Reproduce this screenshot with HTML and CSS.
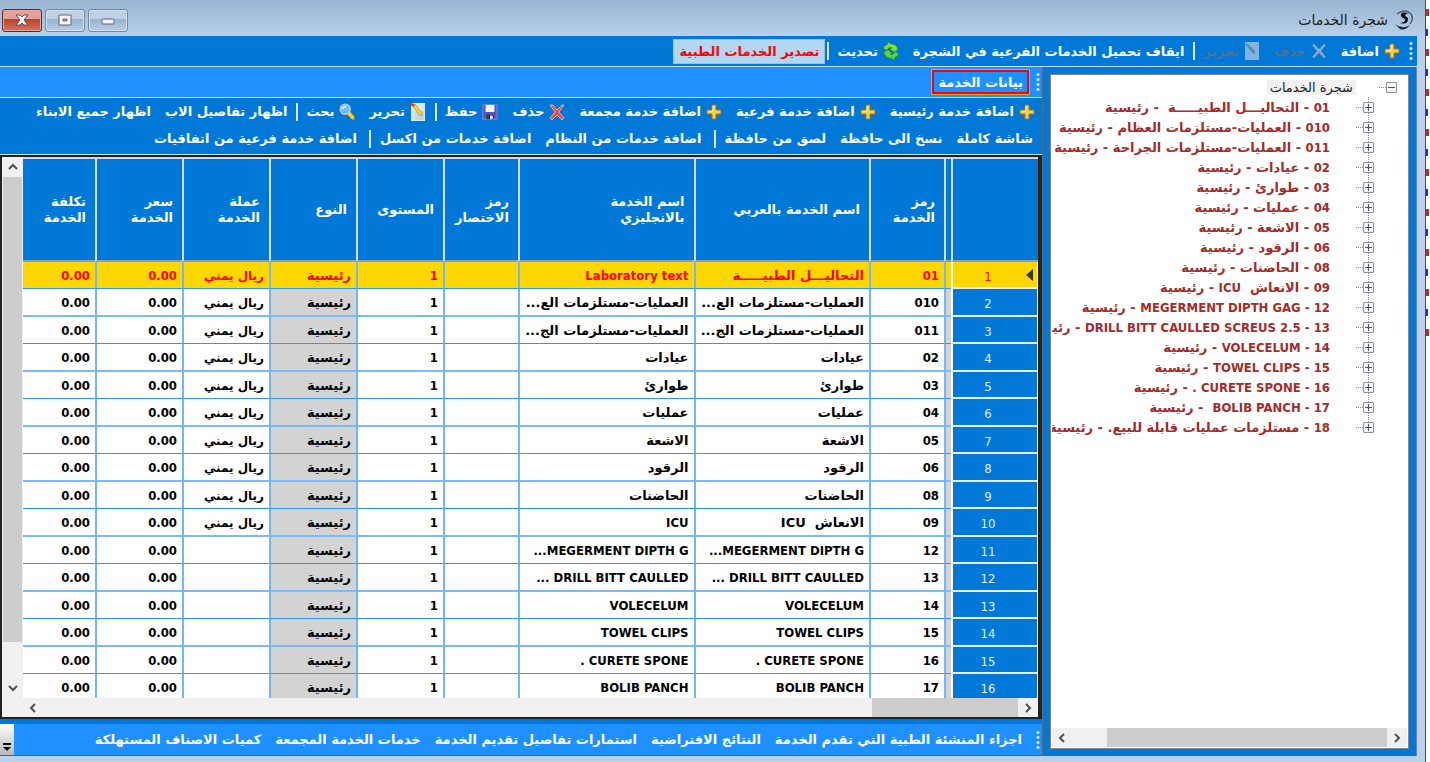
FILE: index.html
```html
<!DOCTYPE html>
<html lang="ar" dir="rtl">
<head>
  <meta charset="UTF-8">
  <meta name="viewport" content="width=device-width, initial-scale=1.0">
  <title>شجرة الخدمات</title>
  <link rel="stylesheet" href="styles.css">
</head>
<body>

  <!-- Shared icons -->
  <svg class="sprite" aria-hidden="true">
    <symbol id="i-plus" viewBox="0 0 16 16"><path d="M6 1h4v5h5v4h-5v5H6v-5H1V6h5z" fill="#f6d050" stroke="#a87a10"/><path d="M7 7V2.500h1.500M2.500 7.500H7" fill="none" stroke="#ffef9e"/></symbol>
    <symbol id="i-x" viewBox="0 0 16 16"><path d="M1 1l3 0 4 5 5-5 2 0-5 7 5 6-2 2-5-5-5 5-2-2 5-6z" fill="#ee4a35" stroke="#ffd9d0" stroke-width=".7"/></symbol>
    <symbol id="i-x-off" viewBox="0 0 16 16"><path d="M1 2l2-1 5 5 5-5 2 1-5 6 5 6-2 1-5-5-5 5-2-1 5-6z" fill="#8aa6c4"/></symbol>
    <symbol id="i-doc-off" viewBox="0 0 16 18"><path d="M1 0h14v18H1z" fill="#80b4e2"/><path d="M1 2l2-1 8 8v3l-3-1z" fill="#5b8bbb"/></symbol>
    <symbol id="i-edit" viewBox="0 0 16 18"><path d="M1 0h14v18H1z" fill="#d7eaf9"/><path d="M5 8h9v9H5z" fill="#b9daf3"/><path d="M3 3l2-2 7 9v3l-3-1z" fill="#ffcf22" stroke="#c48a00" stroke-width=".6"/><path d="M0 1l2-1 3 2-2 2z" fill="#e8322c"/></symbol>
    <symbol id="i-save" viewBox="0 0 18 18"><path d="M1 1h16v16H1z" fill="#5a55b5" stroke="#8d8ae0"/><path d="M4 1h10v8H4z" fill="#f4f4ff"/><path d="M5 12h8v5H5z" fill="#2b3352"/><path d="M9 13h3v4H9z" fill="#dfe6f5"/></symbol>
    <symbol id="i-search" viewBox="0 0 18 20"><path d="M10 11l3-1 4 5v4l-3-1-4-5z" fill="#ffd500" stroke="#c99700" stroke-width=".6"/><circle cx="7" cy="7" r="5.500" fill="#6cb9f7" stroke="#b9c9dd" stroke-width="2"/><path d="M4 7q0-3 4-3" stroke="#e4f4ff" stroke-width="1.500" fill="none"/></symbol>
    <symbol id="i-refresh" viewBox="0 0 16 18"><path d="M1 4l3-1 1-3 3 2q6 0 7 6l-4 2-4-3 2-1q-3-2-5 2l-3-1z" fill="#7be03a" stroke="#2f9a17" stroke-width=".6"/><path d="M15 14l-3 1-1 3-3-2q-6 0-7-6l4-2 4 3-2 1q3 2 5-2l3 1z" fill="#5fd52f" stroke="#2f9a17" stroke-width=".6"/></symbol>
  </svg>

  <div class="screen">
    <div class="behind" aria-hidden="true"><i></i><i></i><i></i><i></i><i></i><i></i><i></i><i></i><i></i><i></i><i></i><i></i><i></i><i></i><i></i><i></i><i></i></div>

    <div class="window">
      <header class="titlebar">
        <svg class="app-icon" viewBox="0 0 20 20"><path d="M3 4q8-6 14 0 3 5-1 10" fill="none" stroke="#4d5f70" stroke-width="1.500"/><path d="M1 14q7 6 15 1-5 6-10 4z" fill="#223"/><path d="M14 3q-8-2-7 3 1 2 4 3 1 3-5 4 8 2 8-4 0-2-3-3 0-2 3-3z" fill="#0b1018"/></svg>
        <h1>شجرة الخدمات</h1>
        <div class="win-buttons">
          <button class="win-btn" aria-label="تصغير"><svg viewBox="0 0 20 14"><rect x="4" y="6" width="12" height="5" rx="1" fill="#f5f5f5" stroke="#5c6575"/></svg></button>
          <button class="win-btn" aria-label="تكبير"><svg viewBox="0 0 20 14"><path d="M4 2h12v10H4zM8 6v2h4V6z" fill="#f5f5f5" fill-rule="evenodd" stroke="#5c6575"/></svg></button>
          <button class="win-btn close" aria-label="اغلاق"><svg viewBox="0 0 20 14"><path d="M4 2h4l2 2 2-2h4l-4 5 4 5h-4l-2-2-2 2H4l4-5z" fill="#f5f5f5" stroke="#5a4a55"/></svg></button>
        </div>
      </header>

      <div class="toolbar top-bar">
        <span class="grip"></span>
        <button class="tool"><svg><use href="#i-plus"/></svg>اضافة</button>
        <button class="tool" disabled><svg><use href="#i-x-off"/></svg>حذف</button>
        <button class="tool" disabled><svg><use href="#i-doc-off"/></svg>تحرير</button>
        <span class="sep"></span>
        <button class="tool">ايقاف تحميل الخدمات الفرعية في الشجرة</button>
        <button class="tool"><svg><use href="#i-refresh"/></svg>تحديث</button>
        <span class="sep"></span>
        <button class="tool export">تصدير الخدمات الطبية</button>
      </div>

      <div class="content">
        <aside class="tree-pane">
          <div class="tree-box">
            <ul class="tree">
              <li class="root"><button class="toggle minus" aria-label="طي"></button><span class="label">شجرة الخدمات</span></li>
              <li><button class="toggle" aria-label="توسيع"></button><span class="label"><span class="en">01</span> - التحاليـــل الطبيـــــة&nbsp; - رئيسية</span></li>
              <li><button class="toggle" aria-label="توسيع"></button><span class="label"><span class="en">010</span> - العمليات-مستلزمات العظام - رئيسية</span></li>
              <li><button class="toggle" aria-label="توسيع"></button><span class="label"><span class="en">011</span> - العمليات-مستلزمات الجراحة - رئيسية</span></li>
              <li><button class="toggle" aria-label="توسيع"></button><span class="label"><span class="en">02</span> - عيادات - رئيسية</span></li>
              <li><button class="toggle" aria-label="توسيع"></button><span class="label"><span class="en">03</span> - طوارئ - رئيسية</span></li>
              <li><button class="toggle" aria-label="توسيع"></button><span class="label"><span class="en">04</span> - عمليات - رئيسية</span></li>
              <li><button class="toggle" aria-label="توسيع"></button><span class="label"><span class="en">05</span> - الاشعة - رئيسية</span></li>
              <li><button class="toggle" aria-label="توسيع"></button><span class="label"><span class="en">06</span> - الرقود - رئيسية</span></li>
              <li><button class="toggle" aria-label="توسيع"></button><span class="label"><span class="en">08</span> - الحاضنات - رئيسية</span></li>
              <li><button class="toggle" aria-label="توسيع"></button><span class="label"><span class="en">09</span> - الانعاش&nbsp; <span class="en">ICU</span> - رئيسية</span></li>
              <li><button class="toggle" aria-label="توسيع"></button><span class="label"><span class="en">12 - MEGERMENT DIPTH GAG</span> - رئيسية</span></li>
              <li><button class="toggle" aria-label="توسيع"></button><span class="label"><span class="en">13 - DRILL BITT CAULLED SCREUS 2.5</span> - رئيسية</span></li>
              <li><button class="toggle" aria-label="توسيع"></button><span class="label"><span class="en">14 - VOLECELUM</span> - رئيسية</span></li>
              <li><button class="toggle" aria-label="توسيع"></button><span class="label"><span class="en">15 - TOWEL CLIPS</span> - رئيسية</span></li>
              <li><button class="toggle" aria-label="توسيع"></button><span class="label"><span class="en">16 - CURETE SPONE .</span> - رئيسية</span></li>
              <li><button class="toggle" aria-label="توسيع"></button><span class="label"><span class="en">17 - BOLIB PANCH</span>&nbsp; - رئيسية</span></li>
              <li><button class="toggle" aria-label="توسيع"></button><span class="label"><span class="en">18</span> - مستلزمات عمليات قابلة للبيع. - رئيسية</span></li>
            </ul>
            <div class="hscroll">
              <svg class="arrow" viewBox="0 0 12 12"><path d="M4 2l4 4-4 4"/></svg>
              <span class="thumb"></span>
              <svg class="arrow" viewBox="0 0 12 12"><path d="M8 2L4 6l4 4"/></svg>
            </div>
          </div>
        </aside>

        <main class="main">
          <nav class="toolbar tab-bar">
            <span class="grip"></span>
            <button class="tab active">بيانات الخدمة</button>
          </nav>

          <div class="tools">
            <div class="toolbar icons">
              <button class="tool"><svg><use href="#i-plus"/></svg>اضافة خدمة رئيسية</button>
              <button class="tool"><svg><use href="#i-plus"/></svg>اضافة خدمة فرعية</button>
              <button class="tool"><svg><use href="#i-plus"/></svg>اضافة خدمة مجمعة</button>
              <button class="tool"><svg><use href="#i-x"/></svg>حذف</button>
              <button class="tool"><svg><use href="#i-save"/></svg>حفظ</button>
              <span class="sep"></span>
              <button class="tool"><svg><use href="#i-edit"/></svg>تحرير</button>
              <button class="tool"><svg><use href="#i-search"/></svg>بحث</button>
              <span class="sep"></span>
              <button class="tool">اظهار تفاصيل الاب</button>
              <button class="tool">اظهار جميع الابناء</button>
            </div>
            <div class="toolbar">
              <button class="tool">شاشة كاملة</button>
              <button class="tool">نسخ الى حافظة</button>
              <button class="tool">لصق من حافظة</button>
              <span class="sep"></span>
              <button class="tool">اضافة خدمات من النظام</button>
              <button class="tool">اضافة خدمات من اكسل</button>
              <span class="sep"></span>
              <button class="tool">اضافة خدمة فرعية من اتفاقيات</button>
            </div>
          </div>

          <div class="grid">
            <div class="grid-body">
              <div class="table-wrap">
                <table>
                  <colgroup>
                    <col class="c-row"><col class="c-id"><col class="c-code"><col><col><col class="c-code"><col class="c-mid"><col class="c-mid"><col class="c-mid"><col class="c-mid"><col class="c-cost">
                  </colgroup>
                  <thead>
                    <tr><th></th><th></th><th>رمز<br>الخدمة</th><th>اسم الخدمة بالعربي</th><th>اسم الخدمة<br>بالانجليزي</th><th>رمز<br>الاختصار</th><th>المستوى</th><th>النوع</th><th>عملة<br>الخدمة</th><th>سعر<br>الخدمة</th><th>تكلفة<br>الخدمة</th></tr>
                  </thead>
                  <tbody id="rows"></tbody>
                </table>
              </div>
              <div class="vscroll">
                <svg class="arrow" viewBox="0 0 12 12"><path d="M2 8l4-4 4 4"/></svg>
                <span class="thumb"></span>
                <svg class="arrow" viewBox="0 0 12 12"><path d="M2 4l4 4 4-4"/></svg>
              </div>
            </div>
            <div class="hscroll">
              <svg class="arrow" viewBox="0 0 12 12"><path d="M4 2l4 4-4 4"/></svg>
              <span class="thumb"></span>
              <svg class="arrow" viewBox="0 0 12 12"><path d="M8 2L4 6l4 4"/></svg>
            </div>
          </div>

          <nav class="toolbar bottom-bar">
            <span class="grip"></span>
            <button class="tab">اجزاء المنشئة الطبية التي تقدم الخدمة</button>
            <button class="tab">النتائج الافتراضية</button>
            <button class="tab">استمارات تفاصيل تقديم الخدمة</button>
            <button class="tab">خدمات الخدمة المجمعة</button>
            <button class="tab">كميات الاصناف المستهلكة</button>
            <button class="more" aria-label="المزيد"><svg viewBox="0 0 8 8"><path d="M0 0h8v2H0zM0 4h8L4 8z"/></svg></button>
          </nav>
        </main>
      </div>
    </div>
  </div>

  <script src="script.js"></script>
</body>
</html>
```
FILE: styles.css
```css
* {
  box-sizing: border-box;
}

body {
  margin: 0;
  font-family: "DejaVu Sans", Tahoma, sans-serif;
  font-size: 13px;
  font-weight: bold;
  color: #000;
}

button {
  font: inherit;
  color: inherit;
  background: none;
  border: none;
  padding: 0;
}

.en {
  font-family: "DejaVu Sans Condensed", "DejaVu Sans", sans-serif;
}

.sprite {
  display: none;
}

.screen {
  display: flex;
  height: 100vh;
  overflow: hidden;
}

/* edge of the window that lies underneath */
.behind {
  width: 4px;
  padding-top: 9px;
  background: #fff;
  display: flex;
  flex-direction: column;
  align-items: flex-end;
  gap: 13px;
  flex-shrink: 0;
}

.behind i {
  height: 7px;
  width: 3px;
  background: #b5302c;
}

.behind i:nth-child(even) {
  background: #1a2fe0;
  width: 2px;
}

.window {
  flex: 1;
  min-width: 0;
  display: flex;
  flex-direction: column;
  background: #b9d1ea;
  border-right: 1px solid #4a4f57;
  padding: 0 8px 6px 0;
}

/* Title bar */
.titlebar {
  height: 36px;
  flex-shrink: 0;
  display: flex;
  align-items: center;
  margin-right: -8px;
  padding: 4px 11px 0 2px;
  gap: 6px;
  background: linear-gradient(#99b4d1, #b9d1ea);
}

.app-icon {
  width: 20px;
  height: 20px;
}

.titlebar h1 {
  margin: 0;
  font-size: 14px;
  font-weight: normal;
  color: #1b1b1b;
}

.win-buttons {
  margin-right: auto;
  display: flex;
  gap: 3px;
}

.win-btn {
  width: 40px;
  height: 23px;
  display: flex;
  align-items: center;
  justify-content: center;
  border: 1px solid #75869e;
  border-radius: 3px;
  box-shadow: inset 0 0 0 1px #d3e1f0;
  background: linear-gradient(#bfd1e5 45%, #98b3d0 45%, #b7cee6);
}

.win-btn svg {
  width: 20px;
  height: 14px;
}

.win-btn.close {
  border-color: #582835;
  box-shadow: inset 0 0 0 1px #e8a79c;
  background: linear-gradient(#e3a296 45%, #bb4228 45%, #d4765f);
}

/* Toolbars */
.toolbar {
  display: flex;
  align-items: center;
  flex-shrink: 0;
  color: #fff;
  white-space: nowrap;
}

.top-bar {
  height: 31px;
  padding-right: 2px;
  background: #0078d7;
  border-bottom: 1px solid #c5e2fa;
}

.grip {
  width: 4px;
  height: 20px;
  margin: 0 2px;
  background: radial-gradient(circle, #cfe6fb 1px, transparent 2px) 0 0 / 4px 5px;
}

.tool,
.tab {
  display: flex;
  align-items: center;
  gap: 5px;
  height: 25px;
  padding: 0 7px;
}

.tool svg {
  width: 16px;
  height: 18px;
}

.tool:disabled {
  color: #4f7193;
}

.sep {
  width: 2px;
  height: 18px;
  margin: 0 2px 0 5px;
  background: #dbeafa;
}

.top-bar .sep,
.icons .sep {
  margin: 0 1px 0 2px;
}

.export {
  padding: 0 5px;
  color: #f00;
  background: #b3d7f3;
  border: 1px solid #8fc4ee;
}

/* Tree */
.content {
  flex: 1;
  min-height: 0;
  display: flex;
}

.tree-pane {
  width: 375px;
  flex-shrink: 0;
  padding: 7px;
  background: #0078d7;
  border-left: 1px solid #5a6c7d;
  border-right: 1px solid #6e88a3;
}

.tree-box {
  height: 100%;
  display: flex;
  flex-direction: column;
  background: #fff;
  border: 1px solid #828790;
  padding: 1px;
  overflow: hidden;
}

.tree {
  flex: 1;
  margin: 0;
  padding: 1px 0 0;
  list-style: none;
  overflow: hidden;
}

.tree li {
  display: flex;
  align-items: center;
  height: 20px;
  padding-right: 33px;
  color: #a52a2a;
  white-space: nowrap;
  background: repeating-linear-gradient(#888 0 1px, transparent 1px 2px) right 38px top 0 / 1px 100% no-repeat;
}

.tree li:last-child {
  background-size: 1px 10px;
}

.tree .root {
  padding-right: 10px;
  color: #222;
  font-weight: normal;
  background: none;
}

.toggle {
  width: 11px;
  height: 11px;
  flex-shrink: 0;
  border: 1px solid #919191;
  border-radius: 1px;
  background:
    linear-gradient(#3a55a0, #3a55a0) center / 7px 1px no-repeat,
    linear-gradient(#3a55a0, #3a55a0) center / 1px 7px no-repeat,
    #f7f7f7;
}

.toggle.minus {
  background:
    linear-gradient(#3a55a0, #3a55a0) center / 7px 1px no-repeat,
    #f7f7f7;
}

.tree li::before {
  content: "";
  order: 1;
  flex-shrink: 0;
  width: 7px;
  border-top: 1px dotted #888;
  margin-left: 23px;
}

.label {
  order: 2;
  padding: 0 3px;
}

.root .label {
  background: #f0f0f0;
}

/* Scroll bars */
.hscroll {
  display: flex;
  align-items: center;
  height: 19px;
  flex-shrink: 0;
  background: #f0f0f0;
}

.arrow {
  width: 12px;
  height: 12px;
  margin: 4px;
  flex-shrink: 0;
  fill: none;
  stroke: #505050;
  stroke-width: 2;
}

.hscroll .thumb {
  width: 280px;
  height: 100%;
  margin-left: auto;
  background: #cdcdcd;
}

.grid .hscroll {
  padding-left: 21px;
}

.grid .hscroll .thumb {
  width: 146px;
}

.vscroll {
  width: 21px;
  display: flex;
  flex-direction: column;
}

.vscroll .thumb {
  flex: 1;
  margin: 0 1px 36px;
  background: #cdcdcd;
}

/* Main area */
.main {
  flex: 1;
  min-width: 0;
  display: flex;
  flex-direction: column;
  background: #0078d7;
}

.tab-bar {
  height: 31px;
  background: #1e90ff;
  border-bottom: 1px solid #c5e2fa;
}

.tab-bar .grip,
.bottom-bar .grip {
  margin-left: 7px;
}

.tab.active {
  height: 24px;
  padding: 0 4px;
  border: 2px solid #f00;
  outline: 1px solid #e8a317;
}

.tools {
  padding: 0 0 2px;
  border-bottom: 1px solid #c5e2fa;
}

.tools .toolbar {
  height: 27px;
  padding-right: 2px;
}

.tools .icons {
  padding-right: 0;
}

/* Data grid */
.grid {
  flex: 1;
  min-height: 0;
  display: flex;
  flex-direction: column;
  border: 2px solid #222;
  border-right-width: 4px;
  background: #f0f0f0;
}

.grid-body {
  flex: 1;
  min-height: 0;
  display: flex;
}

.table-wrap {
  flex: 1;
  min-width: 0;
  overflow: hidden;
  border-top: 2px solid #c8d8e8;
  background: #fff;
}

table {
  width: 100%;
  table-layout: fixed;
  border-collapse: separate;
  border-spacing: 0;
}

.c-row {
  width: 87px;
}

.c-id {
  width: 7px;
}

.c-code {
  width: 75px;
}

.c-mid {
  width: 87px;
}

.c-cost {
  width: 72px;
}

th {
  height: 103px;
  padding: 0 9px;
  color: #fff;
  background: #0078d7;
  text-align: right;
  line-height: 16px;
  border-left: 2px solid #d6dde4;
  border-bottom: 2px solid #7fa3c4;
  white-space: nowrap;
}

td {
  height: 27px;
  padding: 2px 5px 0;
  line-height: 16px;
  border-left: 2px solid #6fb5ff;
  border-bottom: 1px solid #2b95ff;
  white-space: nowrap;
  overflow: hidden;
}

tr:nth-child(even) td {
  height: 28px;
  border-bottom: 2px solid #7ab9ff;
}

th:last-child,
td:last-child {
  border-left: none;
}

td.row-no {
  color: #e6f1fb;
  background: #0078d7;
  font-weight: normal;
  text-align: center;
  padding: 4px 14px 0 0;
  border-left: 2px solid #fff;
  border-right: 1px solid #fff;
  position: relative;
}

tr:nth-child(n) td.row-no {
  border-bottom: 2px solid #e8eef4;
}

td.locked,
td.id {
  background: #d3d3d3;
}

td.currency {
  font-size: 12px;
}

th:nth-child(2),
td.id {
  padding: 0;
}

tr.current td {
  color: #f00;
  background: #ffd700;
}

.current .row-no::before {
  content: "";
  position: absolute;
  right: 4px;
  top: 7px;
  border: 6px solid transparent;
  border-left: none;
  border-right: 7px solid #333;
}

/* Bottom tabs */
.bottom-bar {
  height: 31px;
  margin: 5px 0 1px;
  background: #1e90ff;
}

.more {
  width: 14px;
  height: 100%;
  margin-right: auto;
  display: flex;
  align-items: flex-end;
  justify-content: center;
  padding-bottom: 4px;
  background: linear-gradient(#fff, #b8b8b8);
}

.more svg {
  width: 8px;
  height: 8px;
}
```
FILE: script.js
```js
const longBone = "العمليات-مستلزمات الع...";
const longSurgery = "العمليات-مستلزمات الج...";

// code, arabic name, english name, has currency
const services = [
  ["01", "التحاليـــل الطبيـــــة", "Laboratory text", true],
  ["010", longBone, longBone, true],
  ["011", longSurgery, longSurgery, true],
  ["02", "عيادات", "عيادات", true],
  ["03", "طوارئ", "طوارئ", true],
  ["04", "عمليات", "عمليات", true],
  ["05", "الاشعة", "الاشعة", true],
  ["06", "الرقود", "الرقود", true],
  ["08", "الحاضنات", "الحاضنات", true],
  ["09", "الانعاش\u00a0 ICU", "ICU", true],
  ["12", "MEGERMENT DIPTH G...", "MEGERMENT DIPTH G...", false],
  ["13", "DRILL BITT CAULLED ...", "DRILL BITT CAULLED ...", false],
  ["14", "VOLECELUM", "VOLECELUM", false],
  ["15", "TOWEL CLIPS", "TOWEL CLIPS", false],
  ["16", "CURETE SPONE .", "CURETE SPONE .", false],
  ["17", "BOLIB PANCH", "BOLIB PANCH", false]
];

// latin names use the narrower face
function nameCell(name) {
  return `<td class="${/^[A-Z]/.test(name) ? "en" : ""}">${name}</td>`;
}

document.getElementById("rows").innerHTML = services.map((s, i) => `
  <tr class="${i === 0 ? "current" : ""}">
    <td class="row-no en">${i + 1}</td>
    <td class="id"></td>
    <td class="en">${s[0]}</td>
    ${nameCell(s[1])}
    ${nameCell(s[2])}
    <td></td>
    <td class="en">1</td>
    <td class="locked">رئيسية</td>
    <td class="currency">${s[3] ? "ريال يمني" : ""}</td>
    <td class="en">0.00</td>
    <td class="en">0.00</td>
  </tr>`).join("");
```
